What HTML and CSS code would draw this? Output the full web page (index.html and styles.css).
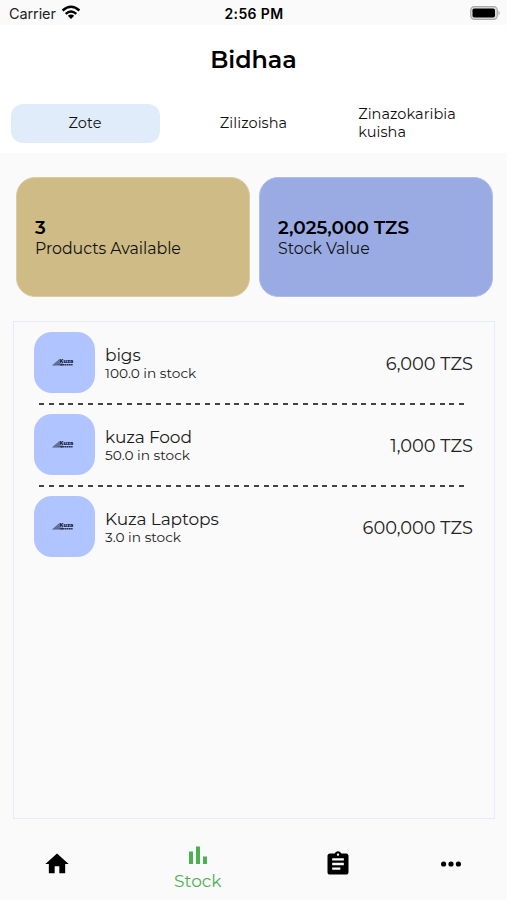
FILE: index.html
```html
<!DOCTYPE html>
<html lang="sw">
<head>
<meta charset="utf-8">
<title>Bidhaa</title>
<link rel="stylesheet" href="styles.css">
</head>
<body>
<svg class="defs" width="0" height="0" aria-hidden="true">
  <symbol id="brand" viewBox="0 0 22 9">
    <path d="M0 7.500 7.500 1v4.500h3.500v2z" fill="#4f5f88"/>
    <path d="M2.500 6.700 7.500 2.500M4.500 6.700 7.500 4.200" stroke="#8e9fc9" stroke-width=".5"/>
    <path d="M8.500 6.800h12.500" stroke="#222c4c" stroke-width="1.500" stroke-dasharray="2 .4 1.300 .4"/>
  </symbol>
</svg>
<div class="status">
  <span class="carrier">Carrier
    <svg width="20" height="15" viewBox="0 0 20 15"><g fill="none" stroke="#000" stroke-width="2.400"><path d="M1.600 5.500Q10-1.800 18.400 5.500"/><path d="M4.700 8.900Q10 4.300 15.300 8.900"/></g><path d="M6.800 10.800Q10 8.200 13.200 10.800L10 14z"/></svg>
  </span>
  <span class="time">2:56 PM</span>
  <svg class="battery" width="31" height="14" viewBox="0 0 31 14"><rect x=".7" y=".7" width="26.600" height="12.600" rx="3.600" fill="#ddd" stroke="#aaa" stroke-width="1.200"/><rect x="2.500" y="2.500" width="22.500" height="9" rx="1.800"/><path d="M28.500 4.500Q31 7 28.500 9.500z" fill="#aaa"/></svg>
</div>
<header>
  <h1>Bidhaa</h1>
  <nav class="tabs">
    <span class="tab active">Zote</span>
    <span class="tab">Zilizoisha</span>
    <span class="tab">Zinazokaribia<br>kuisha</span>
  </nav>
</header>
<main>
  <section class="cards">
    <div class="card gold"><strong>3</strong><span class="label">Products Available</span></div>
    <div class="card blue"><strong>2,025,000 TZS</strong><span class="label">Stock Value</span></div>
  </section>
  <section class="list">
    <article class="row"><div class="thumb"><svg width="22" height="9" viewBox="0 0 22 9"><use href="#brand"/><text x="7.500" y="5" class="brand-name">Kuza</text></svg></div><div class="info"><b>bigs</b><small>100.0 in stock</small></div><span class="price">6,000 TZS</span></article>
    <div class="dashes"></div>
    <article class="row"><div class="thumb"><svg width="22" height="9" viewBox="0 0 22 9"><use href="#brand"/><text x="7.500" y="5" class="brand-name">Kuza</text></svg></div><div class="info"><b>kuza Food</b><small>50.0 in stock</small></div><span class="price">1,000 TZS</span></article>
    <div class="dashes"></div>
    <article class="row"><div class="thumb"><svg width="22" height="9" viewBox="0 0 22 9"><use href="#brand"/><text x="7.500" y="5" class="brand-name">Kuza</text></svg></div><div class="info"><b>Kuza Laptops</b><small>3.0 in stock</small></div><span class="price">600,000 TZS</span></article>
  </section>
</main>
<footer>
  <a><svg width="28" height="28" viewBox="0 0 24 24"><path d="M10 20v-6h4v6h5v-8h3L12 3 2 12h3v8z"/></svg></a>
  <a class="current"><svg width="18" height="18" viewBox="0 0 18 18"><path d="M0 5.500h4V18H0zM7 .5h4V18H7zM14 10.500h4V18h-4z"/></svg><span>Stock</span></a>
  <a><svg width="28" height="28" viewBox="0 0 24 24"><path d="M19 3h-4.180C14.400 1.840 13.300 1 12 1s-2.400.84-2.820 2H5c-1.100 0-2 .9-2 2v14c0 1.100.9 2 2 2h14c1.100 0 2-.9 2-2V5c0-1.100-.9-2-2-2zm-7 0c.55 0 1 .45 1 1s-.45 1-1 1-1-.45-1-1 .45-1 1-1zm2 14H7v-2h7zm3-4H7v-2h10zm0-4H7V7h10z"/></svg></a>
  <a><svg width="28" height="28" viewBox="0 0 28 28"><circle cx="6.600" cy="14" r="2.600"/><circle cx="14" cy="14" r="2.600"/><circle cx="21.400" cy="14" r="2.600"/></svg></a>
</footer>
</body>
</html>
```
FILE: styles.css
```css
* { box-sizing: border-box; }
body {
  margin: 0;
  height: 900px;
  display: flex;
  flex-direction: column;
  background: #fafafa;
  color: #000;
  font-family: Montserrat, Inter, sans-serif;
  overflow: hidden;
}
.defs { position: absolute; }
.brand-name { font: 900 5.400px Inter, sans-serif; fill: #17203b; }
.status {
  height: 25px;
  padding: 2px 6px 0 9px;
  display: grid;
  grid-template-columns: 1fr auto 1fr;
  align-items: center;
  font: 14.500px/20px Inter, sans-serif;
}
.carrier { display: flex; align-items: center; gap: 5px; color: #222; letter-spacing: -.1px; }
.carrier svg { margin-top: -2px; }
.time { font-weight: 600; font-size: 14px; letter-spacing: .4px; padding-right: 2px; }
.battery { justify-self: end; margin-top: -2px; }
header { height: 128px; background: #fff; }
h1 {
  margin: 0;
  padding-top: 20px;
  font-size: 23.800px;
  line-height: 30px;
  font-weight: 600;
  text-align: center;
}
.tabs { display: flex; padding: 29px 11px 0; gap: 19px; }
.tab {
  flex: 0 0 149px;
  height: 39px;
  padding-bottom: 2px;
  display: flex;
  align-items: center;
  justify-content: center;
  border-radius: 12px;
  font-size: 14.500px;
  line-height: 18px;
  letter-spacing: .05px;
  color: #111;
}
.active { background: #e1ecfa; padding-right: 1px; }
.tab:last-child { padding-right: 29px; }
main { flex: 1; padding: 24px 12px 0 13px; }
.cards { display: grid; grid-template-columns: 234px 234px; gap: 9px; padding-left: 2.500px; }
.card {
  height: 120px;
  border-radius: 19px;
  padding: 2px 0 0 18.500px;
  display: flex;
  flex-direction: column;
  justify-content: center;
  border: 1px solid #dccba4;
}
.gold { background: #cfbb86; }
.blue { background: #9aabe4; border-color: #b0bdea; }
.card strong { font-size: 18.500px; line-height: 20px; font-weight: 600; }
.label { font-size: 15.800px; line-height: 21px; letter-spacing: -.03px; color: #111; }
.list {
  height: 498px;
  margin-top: 24px;
  padding: 10px 21px 0 20px;
  border: 1px solid #e8ebf8;
}
.row { height: 61px; display: flex; align-items: center; }
.thumb {
  width: 61px;
  height: 61px;
  padding-right: 3px;
  border-radius: 18px;
  background: #b0c4ff;
  display: grid;
  place-items: center;
}
.info { flex: 1; padding: 3px 0 0 10px; display: flex; flex-direction: column; }
.info b { font-size: 17px; line-height: 19px; font-weight: 400; letter-spacing: -.12px; color: #1c1c1c; }
.info small { font-size: 13.700px; line-height: 17px; color: #222; }
.price { padding-top: 2px; font-size: 17.800px; color: #222; }
.dashes {
  height: 2px;
  margin: 10px 8px 9px 5px;
  background: repeating-linear-gradient(90deg, #444 0 5px, transparent 5px 9.770px);
}
footer { height: 73px; display: flex; padding: 0 0 0 1px; }
footer a { flex: 2; display: flex; flex-direction: column; align-items: center; justify-content: center; }
footer .current { flex: 3; color: #4caf50; fill: #4caf50; font-size: 17px; line-height: 22px; gap: 6px; padding-top: 10px; }
```
